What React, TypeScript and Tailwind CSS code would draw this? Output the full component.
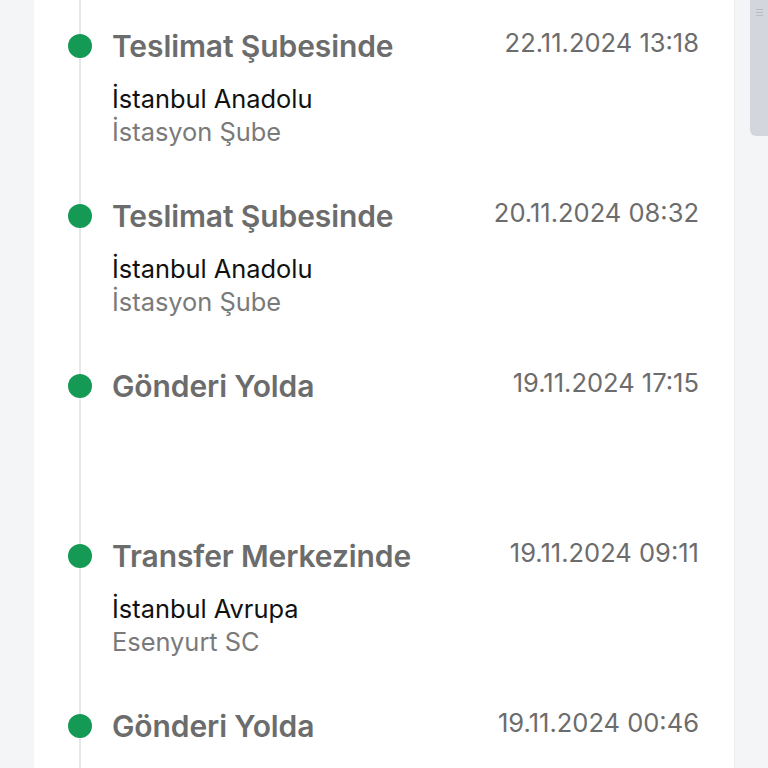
import React from "react";

interface TrackingEvent {
    title: string;
    date: string;
    city?: string;
    branch?: string;
}

const EVENTS: TrackingEvent[] = [
    { title: "Teslimat Şubesinde", date: "22.11.2024 13:18", city: "İstanbul Anadolu", branch: "İstasyon Şube" },
    { title: "Teslimat Şubesinde", date: "20.11.2024 08:32", city: "İstanbul Anadolu", branch: "İstasyon Şube" },
    { title: "Gönderi Yolda", date: "19.11.2024 17:15" },
    { title: "Transfer Merkezinde", date: "19.11.2024 09:11", city: "İstanbul Avrupa", branch: "Esenyurt SC" },
    { title: "Gönderi Yolda", date: "19.11.2024 00:46" },
];

const TimelineItem: React.FC<{ event: TrackingEvent }> = ({ event }) => (
    <div className="flex h-[170px]">
        <div className="ml-[34px] flex h-[32px] w-[24px] shrink-0 items-center">
            <span className="relative z-10 block h-[24px] w-[24px] rounded-full bg-[#149a55]" />
        </div>
        <div className="ml-[20px] flex-1 pr-[35px]">
            <div className="flex h-[32px] items-center justify-between">
                <span className="text-[30px] font-semibold tracking-[-0.1px] text-[#6c6c6c]">{event.title}</span>
                <span className="-mt-[6px] text-[25.5px] text-[#6c6c6c]">{event.date}</span>
            </div>
            {event.city && (
                <div className="mt-[20px] text-[25.4px] leading-[33px]">
                    <div className="text-[#111111]">{event.city}</div>
                    <div className="text-[#7a7a7a]">{event.branch}</div>
                </div>
            )}
        </div>
    </div>
);

export default function App() {
    return (
        <div
            className="flex h-[768px] w-[768px] overflow-hidden bg-[#f4f5f7]"
            style={{ fontFamily: "Inter, 'Noto Sans', sans-serif" }}
        >
            <div className="w-[34px] shrink-0" />
            <div className="relative w-[700px] shrink-0 bg-white pt-[30px]">
                <div className="absolute bottom-0 left-[45px] top-0 w-[2px] bg-[#e6e7ea]" />
                {EVENTS.map((event, idx) => (
                    <TimelineItem key={idx} event={event} />
                ))}
            </div>
            <div className="relative flex-1 border-l border-[#eceef1]">
                <div className="absolute right-0 top-0 h-[136px] w-[18px] rounded-bl-[6px] bg-[#d3d6dc]">
                    <div className="mx-auto mt-[9px] w-[7px] space-y-[2px]">
                        <div className="h-px bg-[#b9bcc3]" />
                        <div className="h-px bg-[#b9bcc3]" />
                        <div className="h-px bg-[#b9bcc3]" />
                    </div>
                </div>
            </div>
        </div>
    );
}
